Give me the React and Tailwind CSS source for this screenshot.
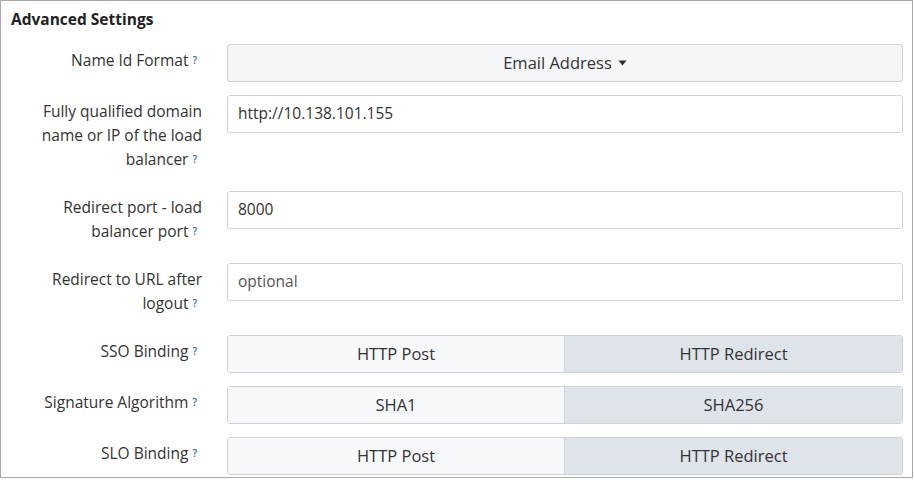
import React from "react";

const Q = () => (
  <sup className="ml-[4px] mr-[5px] text-[10px] text-[#2f6e9f] font-semibold relative -top-[2px]">?</sup>
);

function Label({ lines }) {
  return (
    <div className="w-[201px] shrink-0 text-right pt-1 pb-[7px] leading-6 text-[15.5px] text-[#333]">
      {lines.map((l, i) => (
        <div key={i} className="whitespace-nowrap">
          {l}
          {i === lines.length - 1 && <Q />}
        </div>
      ))}
    </div>
  );
}

function Row({ lines, children }) {
  return (
    <div className="flex items-start gap-[25px]">
      <Label lines={lines} />
      <div className="w-[676px] shrink-0">{children}</div>
    </div>
  );
}

function TextInput({ value, placeholder }) {
  return (
    <div className="h-[38px] w-full border border-[#cfd3d7] rounded-[3px] bg-white flex items-center px-[10px] text-[15.5px]">
      {value ? (
        <span className="text-[#333]">{value}</span>
      ) : (
        <span className="text-[#555]">{placeholder}</span>
      )}
    </div>
  );
}

function Segmented({ left, right }) {
  return (
    <div className="h-[38px] w-full flex border border-[#cfd3d7] rounded-[3px] overflow-hidden text-[16.5px] text-[#333]">
      <div className="w-[337px] bg-[#f7f8f9] border-r border-[#d3d7dc] flex items-center justify-center">
        {left}
      </div>
      <div className="flex-1 bg-[#dfe4ea] flex items-center justify-center">{right}</div>
    </div>
  );
}

export default function App() {
  return (
    <div
      className="w-[913px] h-[478px] border border-[#a8a8a8] bg-white overflow-hidden"
      style={{ fontFamily: '"Open Sans", "Liberation Sans", sans-serif' }}
    >
      <div className="pl-[10px] pt-[8px] h-[43px] text-[15.5px] font-bold text-[#222] leading-5">
        Advanced Settings
      </div>
      <div className="flex flex-col gap-[13px]">
        <Row lines={["Name Id Format"]}>
          <div className="h-[38px] w-full border border-[#cfd3d7] rounded-[3px] bg-[#f5f6f8] flex items-center justify-center text-[16.5px] text-[#333]">
            Email Address
            <svg width="9" height="6" viewBox="0 0 9 6" className="ml-[6px]">
              <path d="M0.5 0.5 L8.5 0.5 L4.5 5.5 Z" fill="#2b2f38" />
            </svg>
          </div>
        </Row>
        <Row lines={["Fully qualified domain", "name or IP of the load", "balancer"]}>
          <TextInput value="http://10.138.101.155" />
        </Row>
        <Row lines={["Redirect port - load", "balancer port"]}>
          <TextInput value="8000" />
        </Row>
        <Row lines={["Redirect to URL after", "logout"]}>
          <TextInput placeholder="optional" />
        </Row>
        <Row lines={["SSO Binding"]}>
          <Segmented left="HTTP Post" right="HTTP Redirect" />
        </Row>
        <Row lines={["Signature Algorithm"]}>
          <Segmented left="SHA1" right="SHA256" />
        </Row>
        <Row lines={["SLO Binding"]}>
          <Segmented left="HTTP Post" right="HTTP Redirect" />
        </Row>
      </div>
    </div>
  );
}
